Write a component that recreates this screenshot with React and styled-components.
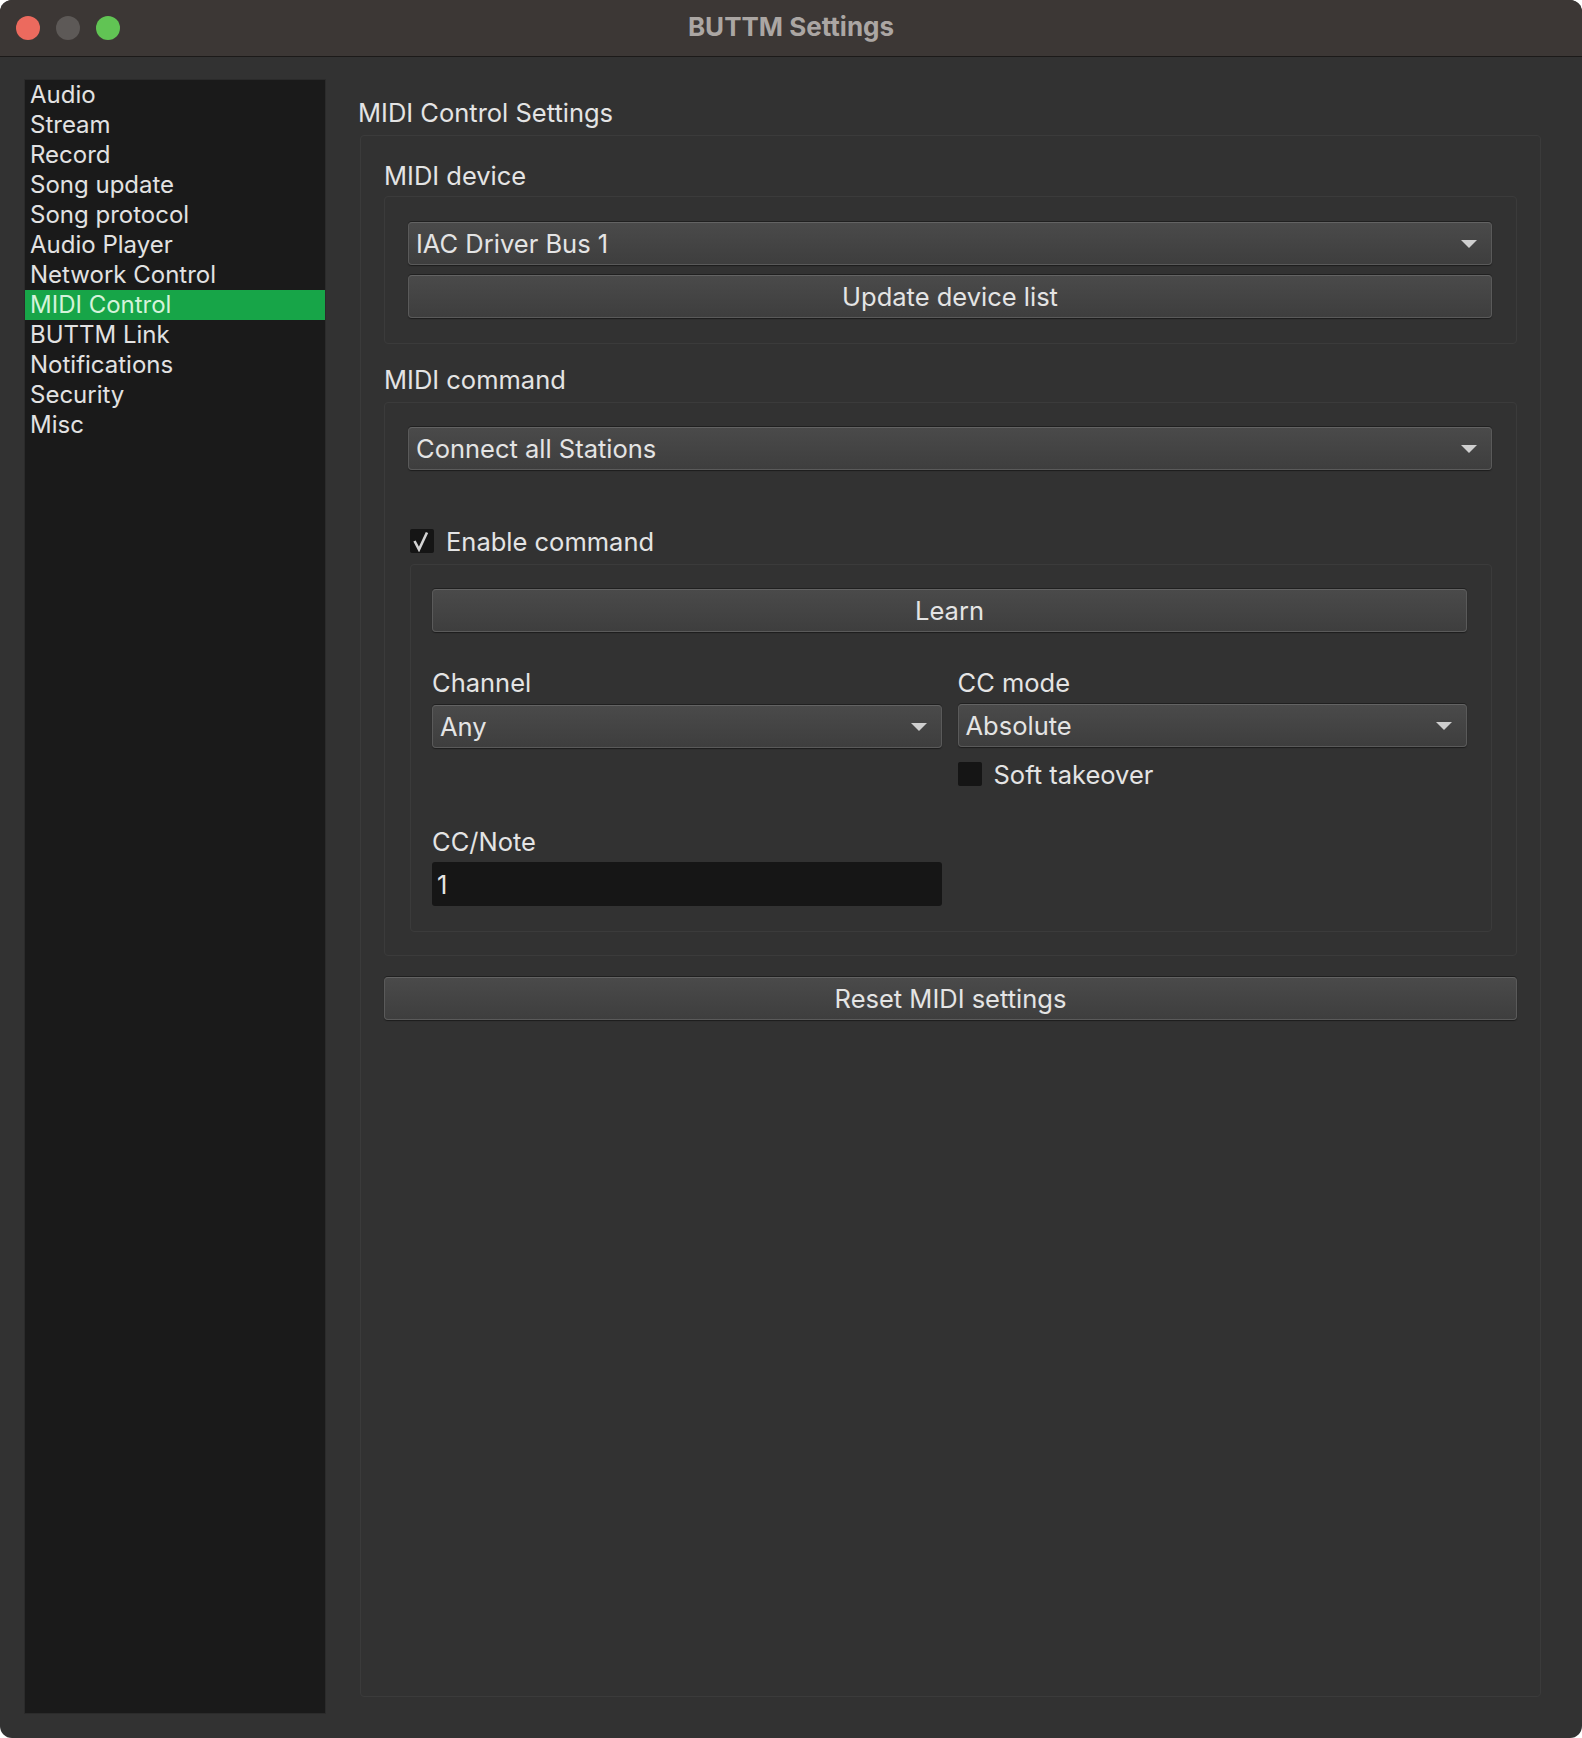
import React from "react";
import styled, { createGlobalStyle } from "styled-components";

const Global = createGlobalStyle`
  html, body { margin: 0; padding: 0; background: #ffffff; }
  body { font-family: Inter, "Noto Sans", "Liberation Sans", sans-serif; }
  * { box-sizing: border-box; }
`;

const Window = styled.div`
  width: 1582px;
  height: 1738px;
  border-radius: 12px;
  overflow: hidden;
  background: #323232;
  display: flex;
  flex-direction: column;
  color: #e4e4e4;
  font-size: 25.5px;
`;

const TitleBar = styled.div`
  position: relative;
  height: 57px;
  flex: none;
  background: #3c3735;
  border-bottom: 1px solid #1c1a19;
  display: flex;
  align-items: center;
  justify-content: center;
`;

const Lights = styled.div`
  position: absolute;
  left: 16px;
  top: 16px;
  display: flex;
  gap: 16px;
`;

const Light = styled.span`
  width: 24px;
  height: 24px;
  border-radius: 50%;
  background: ${(p) => p.$c};
`;

const Title = styled.div`
  font-weight: 700;
  font-size: 26px;
  color: #aba6a3;
  margin-top: -4px;
`;

const Body = styled.div`
  flex: 1;
  display: flex;
  padding: 22px 41px 24px 24px;
  min-height: 0;
`;

const Sidebar = styled.div`
  width: 302px;
  flex: none;
  background: #1a1a1a;
  border: 1px solid #2b2b2b;
  display: flex;
  flex-direction: column;
  font-size: 24px;
`;

const NavItem = styled.div`
  height: 30px;
  line-height: 30px;
  padding-left: 5px;
  white-space: nowrap;
  color: ${(p) => (p.$active ? "#d4f3da" : "#e2e2e2")};
  background: ${(p) => (p.$active ? "#17a548" : "transparent")};
`;

const Main = styled.div`
  flex: 1;
  margin-left: 32px;
  display: flex;
  flex-direction: column;
  padding-top: 20px;
  padding-bottom: 17px;
  min-width: 0;
`;

const Label = styled.div`
  height: 28px;
  line-height: 28px;
  white-space: nowrap;
  margin-top: ${(p) => p.$mt || 0}px;
  margin-bottom: ${(p) => p.$mb || 0}px;
  margin-left: ${(p) => p.$ml || 0}px;
`;

const Frame = styled.div`
  border: 1px solid #3b3b3b;
  border-radius: 4px;
  display: flex;
  flex-direction: column;
  padding: ${(p) => p.$pad};
  flex: ${(p) => (p.$grow ? 1 : "none")};
  margin-top: ${(p) => p.$mt || 0}px;
  margin-left: ${(p) => p.$ml || 0}px;
`;

const Combo = styled.div`
  height: 43px;
  border: 1px solid #5a5a5a;
  border-top-color: #636363;
  border-radius: 4px;
  background: linear-gradient(#4a4a4a, #3e3e3e);
  box-shadow: 0 -1px 0 #202020, 0 1px 1px #1c1c1c;
  display: flex;
  align-items: center;
  justify-content: space-between;
  padding: 0 14px 0 7px;
  white-space: nowrap;
`;

const Arrow = styled.span`
  width: 0;
  height: 0;
  border-left: 8px solid transparent;
  border-right: 8px solid transparent;
  border-top: 8px solid #cfcfcf;
`;

const Button = styled.div`
  height: 43px;
  border: 1px solid #5a5a5a;
  border-top-color: #636363;
  border-radius: 4px;
  background: linear-gradient(#4a4a4a, #3e3e3e);
  box-shadow: 0 -1px 0 #202020, 0 1px 1px #1c1c1c;
  display: flex;
  align-items: center;
  justify-content: center;
  white-space: nowrap;
  margin-top: ${(p) => p.$mt || 0}px;
`;

const CheckRow = styled.div`
  height: 28px;
  display: flex;
  align-items: center;
  gap: 12px;
  margin-top: ${(p) => p.$mt || 0}px;
  margin-left: ${(p) => p.$ml || 0}px;
  white-space: nowrap;
`;

const Box = styled.span`
  width: 24px;
  height: 24px;
  border-radius: 2px;
  background: #151515;
  display: flex;
  align-items: center;
  justify-content: center;
`;

const Grid = styled.div`
  display: grid;
  grid-template-columns: 1fr 1fr;
  column-gap: 16px;
  margin-top: 37px;
`;

const Col = styled.div`
  display: flex;
  flex-direction: column;
`;

const Input = styled.div`
  height: 44px;
  background: #161616;
  border-radius: 3px;
  display: flex;
  align-items: center;
  padding-left: 5px;
  margin-top: 6px;
`;

const nav = [
  "Audio",
  "Stream",
  "Record",
  "Song update",
  "Song protocol",
  "Audio Player",
  "Network Control",
  "MIDI Control",
  "BUTTM Link",
  "Notifications",
  "Security",
  "Misc",
];

const Check = () => (
  <svg width="22" height="22" viewBox="0 0 22 22">
    <path d="M3.5 11 L8 19.5 L16 2.5" fill="none" stroke="#d4d4d4" strokeWidth="2.6" strokeLinejoin="miter" />
  </svg>
);

export default function App() {
  return (
    <>
      <Global />
      <Window>
        <TitleBar>
          <Lights>
            <Light $c="#ec6a5e" />
            <Light $c="#5d5957" />
            <Light $c="#61c454" />
          </Lights>
          <Title>BUTTM Settings</Title>
        </TitleBar>
        <Body>
          <Sidebar>
            {nav.map((n) => (
              <NavItem key={n} $active={n === "MIDI Control"}>
                {n}
              </NavItem>
            ))}
          </Sidebar>
          <Main>
            <Label>MIDI Control Settings</Label>
            <Frame $grow $mt={8} $ml={2} $pad="26px 23px 0 23px">
              <Label $mb={6}>MIDI device</Label>
              <Frame $pad="25px 24px 25px 23px">
                <Combo>
                  <span>IAC Driver Bus 1</span>
                  <Arrow />
                </Combo>
                <Button $mt={10}>Update device list</Button>
              </Frame>
              <Label $mt={22} $mb={8}>MIDI command</Label>
              <Frame $pad="24px 24px 23px 23px">
                <Combo>
                  <span>Connect all Stations</span>
                  <Arrow />
                </Combo>
                <CheckRow $mt={57} $ml={2}>
                  <Box>
                    <Check />
                  </Box>
                  <span>Enable command</span>
                </CheckRow>
                <Frame $mt={9} $ml={2} $pad="24px 24px 25px 21px">
                  <Button>Learn</Button>
                  <Grid>
                    <Col>
                      <Label $mb={8}>Channel</Label>
                      <Combo>
                        <span>Any</span>
                        <Arrow />
                      </Combo>
                      <Label $mt={80}>CC/Note</Label>
                      <Input>1</Input>
                    </Col>
                    <Col>
                      <Label $mb={7}>CC mode</Label>
                      <Combo>
                        <span>Absolute</span>
                        <Arrow />
                      </Combo>
                      <CheckRow $mt={13}>
                        <Box />
                        <span>Soft takeover</span>
                      </CheckRow>
                    </Col>
                  </Grid>
                </Frame>
              </Frame>
              <Button $mt={21}>Reset MIDI settings</Button>
            </Frame>
          </Main>
        </Body>
      </Window>
    </>
  );
}
